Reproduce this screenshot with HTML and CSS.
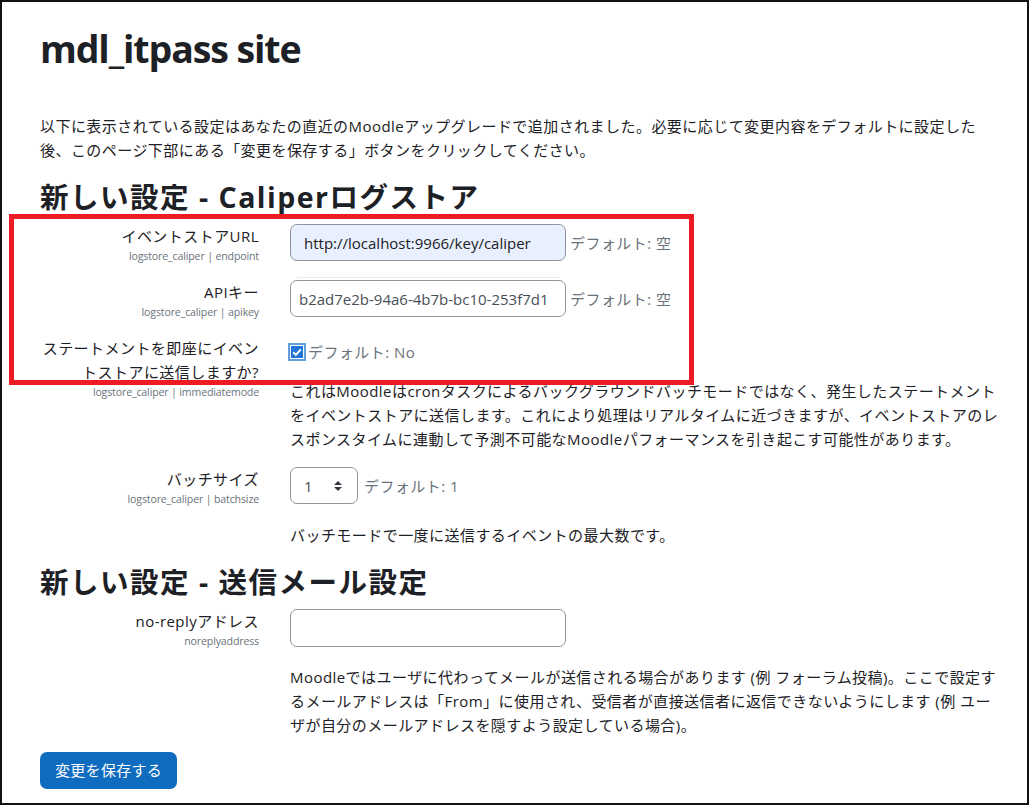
FILE: index.html
```html
<!DOCTYPE html>
<html lang="ja">
<head>
<meta charset="utf-8">
<title>mdl_itpass site</title>
<link rel="stylesheet" href="styles.css">
</head>
<body>
<div class="frame">
  <h1 class="site-title">mdl_itpass site</h1>
  <p class="intro">以下に表示されている設定はあなたの直近のMoodleアップグレードで追加されました。必要に応じて変更内容をデフォルトに設定した<br>後、このページ下部にある「変更を保存する」ボタンをクリックしてください。</p>

  <h2 class="section-title">新しい設定 - Caliperログストア</h2>

  <div class="setting">
    <div class="label">
      <div class="label-title">イベントストアURL</div>
      <div class="shortname">logstore_caliper | endpoint</div>
    </div>
    <div class="control">
      <div class="field-line">
        <div class="input input-autofill">http://localhost:9966/key/caliper</div>
        <span class="default">デフォルト: 空</span>
      </div>
    </div>
  </div>

  <div class="setting">
    <div class="label">
      <div class="label-title">APIキー</div>
      <div class="shortname">logstore_caliper | apikey</div>
    </div>
    <div class="control">
      <div class="field-line">
        <div class="input input-muted">b2ad7e2b-94a6-4b7b-bc10-253f7d1</div>
        <span class="default">デフォルト: 空</span>
      </div>
    </div>
  </div>

  <div class="setting">
    <div class="label">
      <div class="label-title">ステートメントを即座にイベン<br>トストアに送信しますか?</div>
      <div class="shortname">logstore_caliper | immediatemode</div>
    </div>
    <div class="control">
      <div class="check-line">
        <svg class="checkbox" width="18" height="18" viewBox="0 0 18 18"><rect x="0" y="0" width="18" height="18" fill="#5f9fdc"/><rect x="2" y="2" width="14" height="14" fill="#ffffff"/><rect x="3" y="3" width="12" height="12" fill="#1f76d8"/><path d="M5.2 9.3 L7.9 11.9 L12.8 6.3" stroke="#ffffff" stroke-width="2" fill="none"/></svg>
        <span class="default">デフォルト: No</span>
      </div>
      <div class="description">これはMoodleはcronタスクによるバックグラウンドバッチモードではなく、発生したステートメント<br>をイベントストアに送信します。これにより処理はリアルタイムに近づきますが、イベントストアのレ<br>スポンスタイムに連動して予測不可能なMoodleパフォーマンスを引き起こす可能性があります。</div>
    </div>
  </div>

  <div class="setting">
    <div class="label">
      <div class="label-title">バッチサイズ</div>
      <div class="shortname">logstore_caliper | batchsize</div>
    </div>
    <div class="control">
      <div class="field-line">
        <div class="select">
          <span>1</span>
          <svg class="select-arrows" width="10" height="12" viewBox="0 0 10 12"><path d="M5 1 L9 5 L1 5 Z" fill="#343a40"/><path d="M5 11 L9 7 L1 7 Z" fill="#343a40"/></svg>
        </div>
        <span class="default">デフォルト: 1</span>
      </div>
      <div class="description">バッチモードで一度に送信するイベントの最大数です。</div>
    </div>
  </div>

  <h2 class="section-title section-title-2">新しい設定 - 送信メール設定</h2>

  <div class="setting">
    <div class="label">
      <div class="label-title">no-replyアドレス</div>
      <div class="shortname">noreplyaddress</div>
    </div>
    <div class="control">
      <div class="input input-empty"></div>
      <div class="description desc-mail">Moodleではユーザに代わってメールが送信される場合があります (例 フォーラム投稿)。ここで設定す<br>るメールアドレスは「From」に使用され、受信者が直接送信者に返信できないようにします (例 ユー<br>ザが自分のメールアドレスを隠すよう設定している場合)。</div>
    </div>
  </div>

  <div class="button">変更を保存する</div>

  <div class="autofill-line"></div>
  <div class="highlight"></div>
</div>
</body>
</html>
```

FILE: styles.css
```css
html, body {
  margin: 0;
  padding: 0;
  background: #ffffff;
}

body {
  font-family: "Open Sans", "Noto Sans CJK JP", sans-serif;
  font-size: 15px;
  line-height: 24px;
  color: #1d2125;
  letter-spacing: 0.45px;
}

.frame {
  position: relative;
  box-sizing: border-box;
  width: 1029px;
  height: 805px;
  border: 2px solid #111111;
  padding: 0 5px 0 38px;
  overflow: hidden;
}

.site-title {
  margin: 24px 0 0 0;
  font-size: 37.5px;
  line-height: 45px;
  font-weight: 700;
  letter-spacing: -1.1px;
}

.intro {
  margin: 43px 0 0 0;
}

.section-title {
  margin: 18px 0 0 0;
  font-size: 28.5px;
  line-height: 34px;
  font-weight: 700;
  letter-spacing: 1.5px;
}

.section-title-2 {
  margin-top: 18px;
}

.setting {
  display: grid;
  grid-template-columns: 219px 1fr;
  column-gap: 31px;
  margin-top: 10px;
}

.setting + .setting {
  margin-top: 16px;
}

.label {
  text-align: right;
}

.label-title {
  line-height: 24px;
}

.shortname {
  font-size: 10.6px;
  line-height: 16px;
  color: #6a737b;
  letter-spacing: -0.15px;
}

.field-line {
  display: flex;
  align-items: center;
}

.input {
  box-sizing: border-box;
  width: 276px;
  height: 37px;
  border: 1px solid #8f959e;
  border-radius: 7px;
  padding: 0 13px;
  display: flex;
  align-items: center;
  white-space: nowrap;
  overflow: hidden;
  letter-spacing: 0;
}

.input-autofill {
  background: #e8f0fe;
  color: #1d2125;
}

.input-muted {
  color: #495057;
  padding: 0 8px;
}

.input-empty {
  height: 38px;
}

.default {
  color: #6a737b;
  margin-left: 4px;
}

.check-line {
  display: flex;
  align-items: center;
  height: 24px;
  padding-top: 4px;
}

.checkbox {
  display: block;
  margin-left: -2px;
  margin-right: 2px;
}

.check-line .default {
  margin-left: 0;
}

.description {
  margin-top: 15px;
  white-space: nowrap;
}

.select {
  box-sizing: border-box;
  width: 68px;
  height: 37px;
  border: 1px solid #8f959e;
  border-radius: 7px;
  padding: 0 14px 0 13px;
  display: flex;
  align-items: center;
  justify-content: space-between;
  color: #495057;
}

.select + .default {
  margin-left: 6px;
}

.field-line + .description {
  margin-top: 19px;
}

.desc-mail {
  margin-top: 18px;
}

.button {
  display: inline-block;
  margin-top: 15px;
  background: #0f6cbf;
  color: #ffffff;
  border-radius: 7px;
  padding: 6px 15px 7px;
  line-height: 24px;
  letter-spacing: 0.3px;
}

.autofill-line {
  position: absolute;
  left: 295px;
  top: 275px;
  width: 263px;
  height: 1px;
  background: #e2ecf7;
}

.highlight {
  position: absolute;
  left: 7px;
  top: 212px;
  width: 685px;
  height: 171px;
  box-sizing: border-box;
  border: 5px solid #ed1c24;
  pointer-events: none;
}
```
